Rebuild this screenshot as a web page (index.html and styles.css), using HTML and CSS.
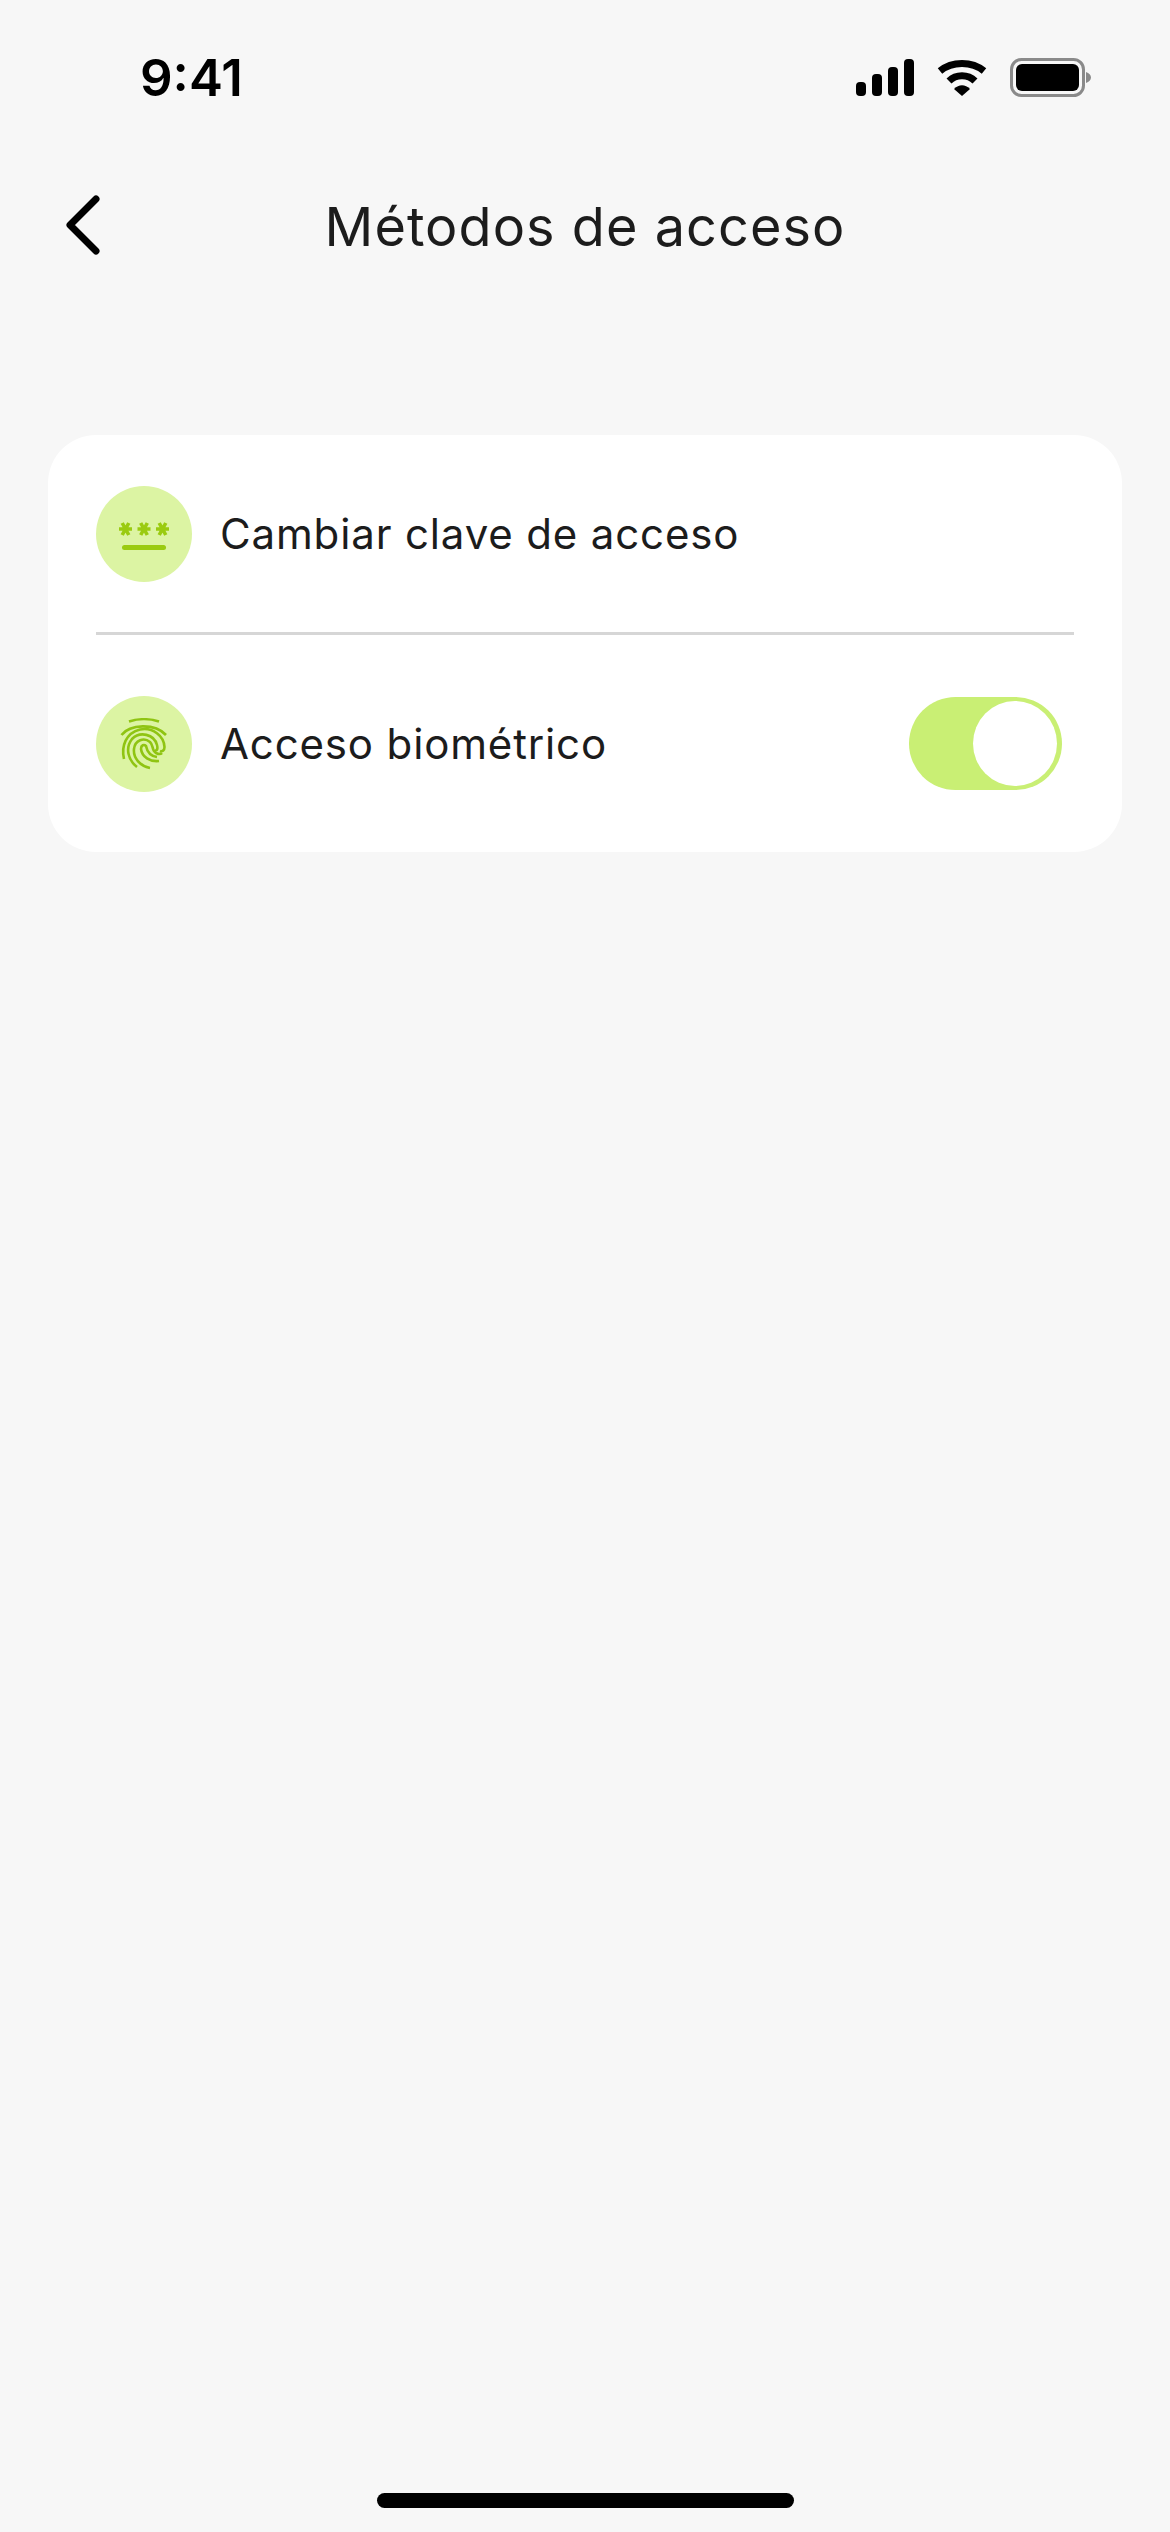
FILE: index.html
```html
<!DOCTYPE html>
<html lang="es">
<head>
<meta charset="utf-8">
<title>Métodos de acceso</title>
<link rel="stylesheet" href="styles.css">
</head>
<body>
<div class="screen">
  <div class="status">
    <span class="time">9:41</span>
    <div class="status-icons">
      <svg width="58" height="37" viewBox="0 0 58 37"><rect x="0" y="23" width="10" height="14" rx="4"/><rect x="16" y="15" width="10" height="22" rx="4"/><rect x="32" y="8" width="10" height="29" rx="4"/><rect x="48" y="0" width="10" height="37" rx="4"/></svg>
      <svg width="50" height="37" viewBox="0 0 50 37"><path d="M3 12 C15 2 35 2 47 12" fill="none" stroke="#000" stroke-width="7"/><path d="M12 22 C19 15 31 15 38 22" fill="none" stroke="#000" stroke-width="7"/><path d="M17 30 C22 25 28 25 33 30 L25 37 Z"/></svg>
      <svg width="81" height="39" viewBox="0 0 81 39"><rect x="1.500" y="1.500" width="72" height="36" rx="10" fill="none" stroke="#8a8a8a" stroke-width="3"/><rect x="6" y="6" width="63" height="27" rx="6"/><path d="M76 14 C79 15 81 17 81 19.500 C81 22 79 24 76 25 Z" fill="#8a8a8a"/></svg>
    </div>
  </div>
  <header class="nav">
    <svg class="back" width="36" height="60" viewBox="0 0 36 60"><path d="M32 4 L6 30 L32 56" fill="none" stroke="#000" stroke-width="7" stroke-linecap="round" stroke-linejoin="round"/></svg>
    <h1 class="title">Métodos de acceso</h1>
  </header>
  <section class="card">
    <div class="row row-first">
      <span class="badge">
        <svg width="52" height="32" viewBox="0 0 52 32"><g fill="none" stroke="#9acb10" stroke-width="3.600"><path d="M1 11 H14 M4.200 5 L10.800 17 M10.800 5 L4.200 17"/><path d="M19.500 11 H32.500 M22.700 5 L29.300 17 M29.300 5 L22.700 17"/><path d="M38 11 H51 M41.200 5 L47.800 17 M47.800 5 L41.200 17"/></g><rect x="4" y="27" width="44" height="5" rx="2.500" fill="#9acb10"/></svg>
      </span>
      <span class="label">Cambiar clave de acceso</span>
    </div>
    <div class="divider"></div>
    <div class="row row-last">
      <span class="badge">
        <svg width="48" height="52" viewBox="0 0 48 52" fill="none" stroke="#8fc412" stroke-width="2.600"><path d="M9 3.500 C18 .5 30 .5 39 3.500"/><path d="M1.500 17 C10 6 35 5 46 17"/><path d="M4 41 C1 28 6 15 20 11.500 C33 9 44 18 44.500 29 C44.500 32 42.500 34 40 33"/><path d="M17 49 C8 42 5 30 12 21 C20 13 34 16 37 27 C38 31 37 33 35 32"/><path d="M30 50 C20 48 13 40 14 31 C15 22 24 19 30 24 C33 27 32 30 34 33 C36 36 40 37 42 35"/><path d="M39 43 C30 44 22 39 21 31 C21 27 24 26 26 28 C27 33 30 38 37 39"/></svg>
      </span>
      <span class="label">Acceso biométrico</span>
      <span class="toggle"><span class="knob"></span></span>
    </div>
  </section>
  <div class="home"></div>
</div>
</body>
</html>
```
FILE: styles.css
```css
* { box-sizing: border-box; }
html, body { margin: 0; padding: 0; }
body { background: #f7f7f7; font-family: Inter, "Liberation Sans", sans-serif; color: #1c1c1c; }
.screen { width: 1170px; height: 2532px; display: flex; flex-direction: column; background: #f7f7f7; }
.status { height: 175px; flex: none; display: flex; justify-content: space-between; align-items: flex-start; padding: 50px 79px 0 140px; }
.time { font-size: 51px; line-height: 56px; font-weight: 600; color: #000; }
.status-icons { display: flex; align-items: center; gap: 23px; padding-top: 8px; }
.status-icons svg { display: block; }
.nav { height: 100px; flex: none; display: flex; align-items: center; position: relative; padding-left: 64px; }
.back { display: block; }
.title { position: absolute; left: 0; right: 0; top: 0; margin: 0; text-align: center; font-size: 54px; line-height: 103px; font-weight: 400; letter-spacing: 1.050px; color: #1c1c1c; }
.card { margin: 160px 48px 0; background: #fff; border-radius: 48px; height: 417px; padding: 0 48px; display: flex; flex-direction: column; }
.row { display: flex; align-items: center; }
.row-first { height: 197px; padding-bottom: 0; }
.row-last { height: 217px; padding-right: 48px; }
.divider { height: 3px; background: #d6d6d6; flex: none; }
.badge { width: 96px; height: 96px; border-radius: 50%; background: #dcf4a3; display: flex; align-items: center; justify-content: center; flex: none; }
.badge svg { display: block; }
.label { margin-left: 28px; font-size: 42px; letter-spacing: 0.850px; line-height: 56px; color: #1c1c1c; }
.toggle { margin-left: auto; width: 153px; height: 93px; border-radius: 47px; background: #c9ef74; display: flex; justify-content: flex-end; align-items: center; padding-right: 5px; flex: none; margin-right: -36px; }
.knob { width: 84px; height: 85px; border-radius: 50%; background: #fff; display: block; }
.home { width: 417px; height: 15px; border-radius: 8px; background: #000; margin: auto auto 24px; }
```
